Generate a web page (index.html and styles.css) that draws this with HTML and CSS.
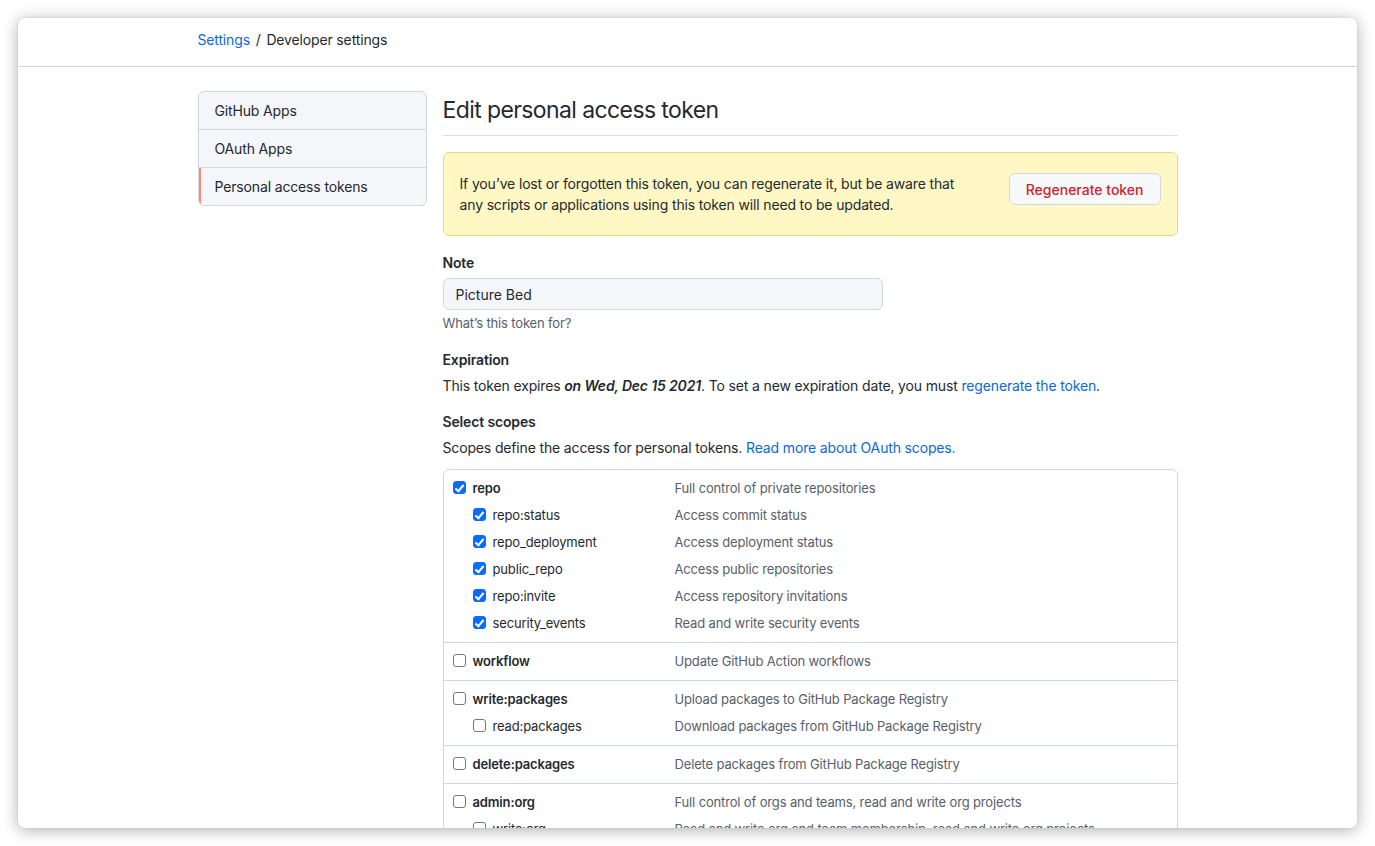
FILE: index.html
```html
<!DOCTYPE html>
<html lang="en">
<head>
<meta charset="utf-8">
<title>Edit personal access token</title>
<link rel="stylesheet" href="styles.css">
</head>
<body>
<div class="window">
  <header class="topbar">
    <nav class="container breadcrumb"><a href="#" class="link">Settings</a> <span class="sep">/</span> Developer settings</nav>
  </header>
  <div class="container layout">
    <aside class="sidebar">
      <a href="#" class="menu-item">GitHub Apps</a>
      <a href="#" class="menu-item">OAuth Apps</a>
      <a href="#" class="menu-item selected">Personal access tokens</a>
    </aside>
    <main class="main">
      <h1 class="subhead">Edit personal access token</h1>
      <div class="flash">
        <p class="flash-text">If you’ve lost or forgotten this token, you can regenerate it, but be aware that<br>any scripts or applications using this token will need to be updated.</p>
        <button class="btn-danger">Regenerate token</button>
      </div>

      <div class="form-group note-group">
        <label class="label">Note</label>
        <input class="input" type="text" value="Picture Bed">
        <p class="note">What’s this token for?</p>
      </div>

      <div class="form-group">
        <div class="label">Expiration</div>
        <p class="text">This token expires <em class="date">on Wed, Dec 15 2021</em>. To set a new expiration date, you must <a href="#" class="link">regenerate the token</a>.</p>
      </div>

      <div class="form-group">
        <div class="label">Select scopes</div>
        <p class="text">Scopes define the access for personal tokens. <a href="#" class="link">Read more about OAuth scopes.</a></p>
      </div>

      <div class="scopes">
        <div class="group">
          <div class="row"><span class="name"><span class="cb on"></span><b>repo</b></span><span class="desc">Full control of private repositories</span></div>
          <div class="row sub"><span class="name"><span class="cb on"></span>repo:status</span><span class="desc">Access commit status</span></div>
          <div class="row sub"><span class="name"><span class="cb on"></span>repo_deployment</span><span class="desc">Access deployment status</span></div>
          <div class="row sub"><span class="name"><span class="cb on"></span>public_repo</span><span class="desc">Access public repositories</span></div>
          <div class="row sub"><span class="name"><span class="cb on"></span>repo:invite</span><span class="desc">Access repository invitations</span></div>
          <div class="row sub"><span class="name"><span class="cb on"></span>security_events</span><span class="desc">Read and write security events</span></div>
        </div>
        <div class="group">
          <div class="row"><span class="name"><span class="cb"></span><b>workflow</b></span><span class="desc">Update GitHub Action workflows</span></div>
        </div>
        <div class="group">
          <div class="row"><span class="name"><span class="cb"></span><b>write:packages</b></span><span class="desc">Upload packages to GitHub Package Registry</span></div>
          <div class="row sub"><span class="name"><span class="cb"></span>read:packages</span><span class="desc">Download packages from GitHub Package Registry</span></div>
        </div>
        <div class="group">
          <div class="row"><span class="name"><span class="cb"></span><b>delete:packages</b></span><span class="desc">Delete packages from GitHub Package Registry</span></div>
        </div>
        <div class="group">
          <div class="row"><span class="name"><span class="cb"></span><b>admin:org</b></span><span class="desc">Full control of orgs and teams, read and write org projects</span></div>
          <div class="row sub"><span class="name"><span class="cb"></span>write:org</span><span class="desc">Read and write org and team membership, read and write org projects</span></div>
        </div>
      </div>
    </main>
  </div>
</div>
</body>
</html>
```

FILE: styles.css
```css
* { box-sizing: border-box; }
html, body { margin: 0; padding: 0; background: #ffffff; }
body {
  font-family: Inter, "Liberation Sans", sans-serif;
  font-size: 14px;
  line-height: 21px;
  letter-spacing: -0.15px;
  color: #24292f;
  padding: 18px;
  height: 846px;
  overflow: hidden;
}
.window {
  height: 810px;
  background: #fff;
  border-radius: 7px;
  overflow: hidden;
  box-shadow: 0 2px 16px rgba(0,0,0,0.32), 0 0 1px rgba(0,0,0,0.2);
}
.container { width: 980px; margin: 0 auto; }
.topbar {
  height: 49px;
  padding-bottom: 5px;
  border-bottom: 1px solid #d0d7de;
  display: flex;
  align-items: center;
}
.link { color: #0969da; text-decoration: none; }
.sep { margin: 0 2px; }
.layout { display: flex; gap: 16px; padding-top: 24px; }
.sidebar {
  width: 229px;
  flex: none;
  align-self: flex-start;
  border: 1px solid #d0d7de;
  border-radius: 6px;
  background: #f5f6f9;
  overflow: hidden;
}
.menu-item {
  display: block;
  padding: 8px 16px;
  color: #24292f;
  text-decoration: none;
  border-top: 1px solid #d0d7de;
  height: 38px;
}
.menu-item:first-child { border-top: 0; height: 37px; }
.menu-item.selected { box-shadow: inset 2px 0 0 #fd8c73; }
.main { flex: 1; min-width: 0; }
.subhead {
  margin: 0 0 16px;
  font-size: 23px;
  letter-spacing: -0.6px;
  font-weight: 400;
  line-height: 38px;
  padding-bottom: 6px;
  border-bottom: 1px solid #d8dee4;
}
.flash {
  display: flex;
  align-items: flex-start;
  justify-content: space-between;
  padding: 20px 16px;
  background: #fff8c5;
  border: 1px solid #ecd681;
  border-radius: 6px;
  margin-bottom: 16px;
}
.flash-text { margin: 0; }
.btn-danger {
  font: inherit;
  font-weight: 500;
  height: 32px;
  padding: 0 16px;
  color: #cf222e;
  background: #f6f8fa;
  border: 1px solid #d0d7de;
  border-radius: 6px;
}
.form-group { margin-bottom: 15px; }
.form-group.note-group { margin-bottom: 17px; }
.label { display: block; font-weight: 600; margin-bottom: 5px; }
.input {
  display: block;
  width: 440px;
  height: 32px;
  padding: 0 12px;
  font: inherit;
  color: #24292f;
  background: #f5f6f9;
  border: 1px solid #d0d7de;
  border-radius: 6px;
}
.note { margin: 4px 0 0; font-size: 13px; line-height: 18px; color: #57606a; }
.text { margin: 1px 0 0; }
.date { font-weight: 600; }
.scopes {
  margin-top: -4px;
  border: 1px solid #d0d7de;
  border-radius: 6px;
  font-size: 13px;
}
.group { padding: 5px 0 5px; border-top: 1px solid #d0d7de; }
.group:first-child { border-top: 0; padding-top: 5px; }
.row { display: flex; align-items: center; height: 27px; }
.name { width: 231px; flex: none; display: flex; align-items: center; padding-left: 9px; }
.row.sub .name { padding-left: 29px; }
.name b { font-weight: 600; }
.desc { color: #57606a; }
.cb {
  width: 13px;
  height: 13px;
  margin-right: 7px;
  border: 1px solid #767676;
  border-radius: 3px;
  background: #fff;
  flex: none;
  position: relative;
  top: -1px;
}
.cb.on {
  background: #0a6cff;
  border-color: #0a6cff;
}
.cb.on::after {
  content: "";
  position: absolute;
  left: 3.5px;
  top: 0.5px;
  width: 3px;
  height: 7px;
  border: solid #fff;
  border-width: 0 2px 2px 0;
  transform: rotate(40deg);
}
```
